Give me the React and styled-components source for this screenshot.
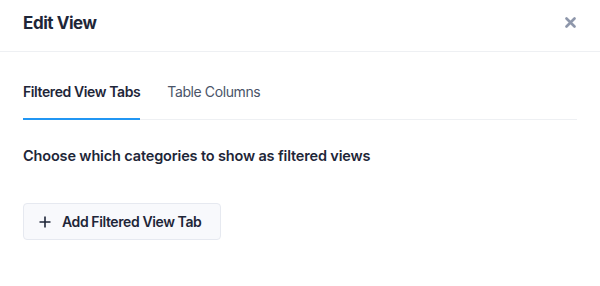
import styled, { createGlobalStyle } from "styled-components";

const GlobalStyle = createGlobalStyle`
  body {
    margin: 0;
    background: #ffffff;
    font-family: Inter, "Noto Sans", sans-serif;
    color: #1f2937;
  }
`;

const App = () => {
  return (
    <Modal>
      <GlobalStyle />
      <Header>
        <Title>Edit View</Title>
        <CloseButton aria-label="Close">
          <svg width="11" height="11" viewBox="0 0 11 11">
            <path d="M1.5 1.5l8 8M9.5 1.5l-8 8" stroke="#8e97ab" strokeWidth="2.6" strokeLinecap="round" />
          </svg>
        </CloseButton>
      </Header>
      <Body>
        <Tabs>
          <Tab active>Filtered View Tabs</Tab>
          <Tab>Table Columns</Tab>
        </Tabs>
        <Heading>Choose which categories to show as filtered views</Heading>
        <AddButton>
          <svg width="12" height="12" viewBox="0 0 12 12">
            <path d="M6 0.5v11M0.5 6h11" stroke="#1e2638" strokeWidth="1.6" />
          </svg>
          Add Filtered View Tab
        </AddButton>
      </Body>
    </Modal>
  );
};

export default App;

const Modal = styled.div`
  width: 600px;
  height: 286px;
  background: #fff;
`;

const Header = styled.header`
  display: flex;
  align-items: center;
  justify-content: space-between;
  height: 52px;
  padding: 0 24px 6px 23px;
  box-sizing: border-box;
  border-bottom: 1px solid #eef0f3;
`;

const Title = styled.h1`
  margin: 0;
  font-size: 17px;
  font-weight: 700;
  color: #1e2638;
  letter-spacing: -0.45px;
`;

const CloseButton = styled.button`
  display: flex;
  border: 0;
  background: none;
  padding: 0;
  cursor: pointer;
`;

const Body = styled.div`
  padding: 0 23px;
`;

const Tabs = styled.nav`
  display: flex;
  gap: 27px;
  margin-top: 30px;
  border-bottom: 1px solid #eef0f3;
`;

const Tab = styled.div`
  padding-bottom: 16px;
  margin-bottom: -1px;
  font-size: 14px;
  line-height: 20px;
  letter-spacing: -0.4px;
  font-weight: ${(p) => (p.active ? 600 : 400)};
  color: ${(p) => (p.active ? "#1e2638" : "#4a5468")};
  border-bottom: 2px solid ${(p) => (p.active ? "#2196f3" : "transparent")};
`;

const Heading = styled.h2`
  margin: 26px 0 0;
  font-size: 14.5px;
  line-height: 20px;
  letter-spacing: -0.15px;
  font-weight: 600;
  color: #1e2638;
`;

const AddButton = styled.button`
  display: flex;
  align-items: center;
  gap: 11px;
  margin-top: 37px;
  height: 37px;
  padding: 0 19px 0 15px;
  font-family: inherit;
  font-size: 14px;
  letter-spacing: -0.4px;
  font-weight: 600;
  color: #1e2638;
  background: #f8f9fc;
  border: 1px solid #e6e9f0;
  border-radius: 4px;
`;
